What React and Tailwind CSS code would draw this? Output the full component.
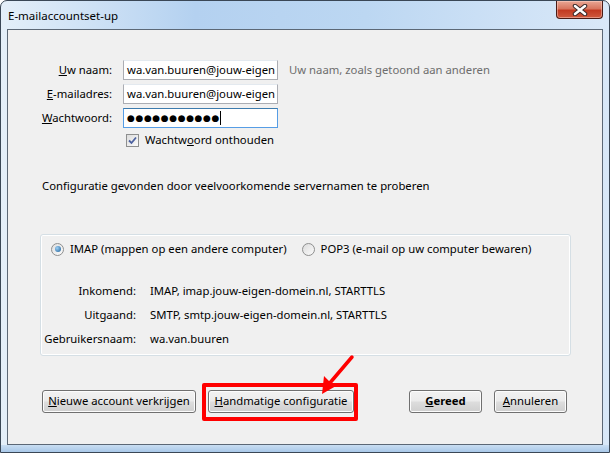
export default function App() {
  const btn =
    "h-[23px] flex items-center justify-center rounded-[3px] border border-[#707070] bg-[linear-gradient(180deg,#f2f2f2_0%,#ebebeb_48%,#dddddd_52%,#cfcfcf_100%)] shadow-[inset_0_0_0_1px_#fcfcfc] text-black";

  return (
    <div className="w-[610px] h-[453px] bg-white font-['Noto_Sans',sans-serif] text-[11.3px] text-black">
      <div className="w-full h-full flex flex-col rounded-t-[7px] border border-[#3a4756] bg-[linear-gradient(90deg,#e4eff9_0%,#d2e4f6_12%,#b4d1f0_32%,#bcd7f2_60%,#cfe2f6_85%,#d9e8f8_100%)]">
        {/* Title bar */}
        <div className="h-[28px] flex items-start">
          <span className="mt-[6px] ml-[7px] text-[11.5px] text-black">E-mailaccountset-up</span>
          <div className="ml-auto mr-[6px] w-[47px] h-[18px] rounded-b-[4px] border border-t-0 border-[#4a1c16] bg-[linear-gradient(180deg,#e9a795_0%,#d7765f_45%,#c23a22_55%,#cf5a3e_100%)] shadow-[inset_0_0_0_1px_rgba(255,220,210,0.45)] flex items-center justify-center">
            <svg width="16" height="12" viewBox="0 0 16 12">
              <path d="M3 2 L13 10 M13 2 L3 10" stroke="#3b2a2a" strokeWidth="4.5" strokeLinecap="round" />
              <path d="M3 2 L13 10 M13 2 L3 10" stroke="#ffffff" strokeWidth="2.5" strokeLinecap="round" />
            </svg>
          </div>
        </div>

        {/* Content */}
        <div className="mx-[6px] h-[416px] border border-[#5c6876] bg-[#f0f0f0] flex flex-col">
          {/* Form */}
          <div className="pt-[30px] flex flex-col gap-[4px]">
            <div className="flex items-center h-[20px]">
              <span className="w-[104px] text-right"><u>U</u>w naam:</span>
              <div className="ml-[11px] w-[155px] h-[20px] border border-[#abadb3] border-t-[#e3e9ef] bg-white whitespace-nowrap pl-[3px] leading-[18px]">
                wa.van.buuren@jouw-eigen
              </div>
              <span className="ml-[11px] text-[#6d6d6d]">Uw naam, zoals getoond aan anderen</span>
            </div>
            <div className="flex items-center h-[20px]">
              <span className="w-[104px] text-right"><u>E</u>-mailadres:</span>
              <div className="ml-[11px] w-[155px] h-[20px] border border-[#abadb3] border-t-[#e3e9ef] bg-white whitespace-nowrap pl-[3px] leading-[18px]">
                wa.van.buuren@jouw-eigen
              </div>
            </div>
            <div className="flex items-center h-[20px]">
              <span className="w-[104px] text-right"><u>W</u>achtwoord:</span>
              <div className="ml-[11px] w-[155px] h-[20px] border border-[#569de5] border-t-[#3d7bad] bg-white flex items-center pl-[3px]">
                <span className="text-[9px] tracking-[0.6px] font-['DejaVu_Sans',sans-serif] leading-none">●●●●●●●●●●●</span>
                <span className="w-px h-[14px] bg-black"></span>
              </div>
            </div>
          </div>

          {/* Remember checkbox */}
          <div className="mt-[6px] pl-[118px] flex items-center h-[13px]">
            <div className="w-[13px] h-[13px] border border-[#8e8f8f] bg-[linear-gradient(135deg,#dcdcdc,#fbfbfb)] p-[1px] flex items-center justify-center">
              <svg width="9" height="9" viewBox="0 0 9 9">
                <path d="M1 4.5 L3.5 7 L8 1.5" fill="none" stroke="#4c61a0" strokeWidth="1.8" />
              </svg>
            </div>
            <span className="ml-[6px]">Wachtw<u>o</u>ord onthouden</span>
          </div>

          <p className="mt-[31px] pl-[34px] leading-[16px]">
            Configuratie gevonden door veelvoorkomende servernamen te proberen
          </p>

          {/* Group box */}
          <div className="mt-[40px] ml-[32px] w-[531px] h-[122px] rounded-[3px] border border-[#d5dfe5] shadow-[inset_0_0_0_1px_#ffffff] flex flex-col">
            <div className="mt-[6px] pl-[10px] flex items-center h-[16px]">
              <span className="w-[13px] h-[13px] rounded-full border border-[#8e8f8f] bg-[linear-gradient(135deg,#e0e0e0,#fbfbfb)] flex items-center justify-center">
                <span className="w-[6px] h-[6px] rounded-full bg-[radial-gradient(circle_at_35%_35%,#9dd0f5,#1d5f98)]"></span>
              </span>
              <span className="ml-[6px]">IMAP (mappen op een andere computer)</span>
              <span className="ml-[15px] w-[13px] h-[13px] rounded-full border border-[#8e8f8f] bg-[linear-gradient(135deg,#dcdcdc,#fbfbfb)]"></span>
              <span className="ml-[6px]">POP3 (e-mail op uw computer bewaren)</span>
            </div>
            <div className="mt-[22px] flex flex-col">
              <div className="flex items-center h-[24px]">
                <span className="w-[95px] text-right">Inkomend:</span>
                <span className="ml-[14px]">IMAP, imap.jouw-eigen-domein.nl, STARTTLS</span>
              </div>
              <div className="flex items-center h-[24px]">
                <span className="w-[95px] text-right">Uitgaand:</span>
                <span className="ml-[14px]">SMTP, smtp.jouw-eigen-domein.nl, STARTTLS</span>
              </div>
              <div className="flex items-center h-[24px]">
                <span className="w-[95px] text-right">Gebruikersnaam:</span>
                <span className="ml-[14px]">wa.van.buuren</span>
              </div>
            </div>
          </div>

          {/* Buttons */}
          <div className="mt-[34px] pl-[34px] pr-[35px] flex items-center">
            <button className={`${btn} w-[154px]`}>
              <span><u>N</u>ieuwe account verkrijgen</span>
            </button>
            <div className="relative ml-[12px]">
              <button className={`${btn} w-[146px]`}>
                <span><u>H</u>andmatige configuratie</span>
              </button>
              <div className="absolute left-[-6px] right-[-4px] top-[-7px] bottom-[-8px] border-[4px] border-[#ff0000] rounded-[2px]"></div>
              <svg className="absolute left-[100px] top-[-36px]" width="50" height="44" viewBox="0 0 50 44">
                <path d="M44 3 L21 30" stroke="#ff0000" strokeWidth="3.5" strokeLinecap="round" />
                <path d="M14 40 L16 22 L21 27 L28 32 Z" fill="#ff0000" />
              </svg>
            </div>
            <button className={`${btn} w-[73px] ml-auto font-bold`}>
              <span><u>G</u>ereed</span>
            </button>
            <button className={`${btn} w-[73px] ml-[12px]`}>
              <span><u>A</u>nnuleren</span>
            </button>
          </div>
        </div>
        <div className="flex-1 bg-[linear-gradient(180deg,#c9def3,#a9c8e8)]"></div>
      </div>
    </div>
  );
}
